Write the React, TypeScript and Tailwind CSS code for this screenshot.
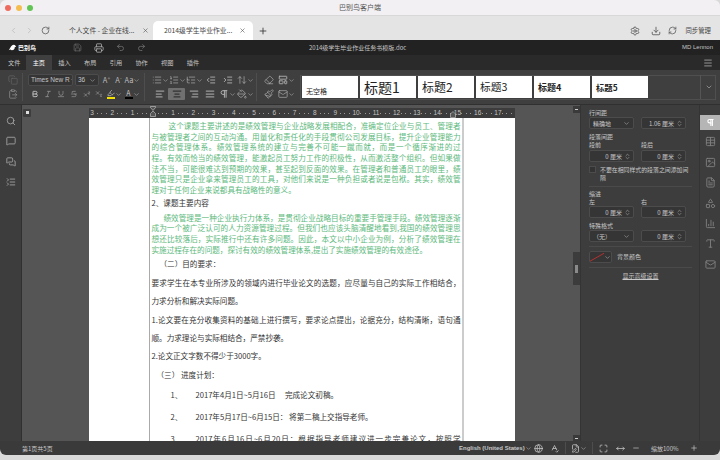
import React from "react";
import {
  ChevronLeft, ChevronRight, RotateCw, X, Plus, Settings, Download, RefreshCw, Save, Printer, Undo2, Redo2, Menu,
  Copy, ClipboardPaste, ChevronDown, ChevronsUpDown, Bold, Italic, Underline, Strikethrough, Superscript, Subscript, Highlighter,
  List, ListOrdered, ListTree, IndentDecrease, IndentIncrease, ArrowUpDown, AlignLeft, AlignCenter, AlignRight, AlignJustify, Pilcrow,
  PaintBucket, Eraser, LayoutTemplate, Paintbrush, Mail, Search, MessageSquare, MessagesSquare, ListCollapse, Table, Image, FileText,
  Shapes, BarChart3, Type, Globe, SpellCheck, FilePen, Maximize, MoveHorizontal, Minus,
} from "lucide-react";

const font = "font-['Noto_Sans_CJK_SC','Liberation_Sans',sans-serif]";

function Caret({ className = "" }: { className?: string }) {
  return <ChevronDown size={7} strokeWidth={2} className={"text-[#aaa] shrink-0 " + className} />;
}

function Tb({ icon: I, w = 13, caret = false, active = false, size = 10, stroke = 1.6, color = "text-[#b0b0b0]" }: { icon: any; w?: number; caret?: boolean; active?: boolean; size?: number; stroke?: number; color?: string }) {
  return (
    <div style={{ width: w }} className={"h-[12px] flex items-center justify-center shrink-0 " + (active ? "bg-[#707070] rounded-[1px]" : "")}>
      <I size={size} strokeWidth={stroke} className={color} />
      {caret && <Caret />}
    </div>
  );
}

function TxtB({ t, w = 13, caret = false, cls = "" }: { t: React.ReactNode; w?: number; caret?: boolean; cls?: string }) {
  return (
    <div style={{ width: w }} className={"h-[12px] flex items-center justify-center shrink-0 text-[7.5px] text-[#b8b8b8] " + cls}>
      {t}
      {caret && <Caret />}
    </div>
  );
}

function Sep() {
  return <div className="w-px h-[28px] bg-[#4e4e4e] shrink-0" />;
}

function Style({ t, cls }: { t: string; cls: string }) {
  return (
    <div className={"w-[56px] h-[22px] bg-white flex items-center pl-[4px] text-[#222] leading-none shrink-0 whitespace-nowrap " + cls}>{t}</div>
  );
}

function Num({ v }: { v: string }) {
  return (
    <div className="w-[45px] h-[12px] bg-[#353535] border border-[#4c4c4c] rounded-[2px] flex items-center justify-end pr-[2px] text-[6px] text-[#c8c8c8] shrink-0">
      <span>{v}</span>
      <ChevronsUpDown size={7} className="ml-[2px] text-[#aaa]" />
    </div>
  );
}

function Sel({ v }: { v: string }) {
  return (
    <div className="w-[45px] h-[12px] bg-[#353535] border border-[#4c4c4c] rounded-[2px] flex items-center justify-between px-[3px] text-[6px] text-[#c8c8c8] shrink-0">
      <span>{v}</span>
      <Caret />
    </div>
  );
}

function Lbl({ t, cls = "" }: { t: string; cls?: string }) {
  return <div className={"text-[6px] leading-[8px] text-[#c8c8c8] " + cls}>{t}</div>;
}

const green1 = [
  "这个课题主要讲述的是绩效管理与企业战略发展相配合，准确定位企业与员工、管理者",
  "与被管理者之间的互动沟通。用量化和责任化的手段贯彻公司发展目标，提升企业管理能力",
  "的综合管理体系。绩效管理系统的建立与完善不可能一蹴而就，而是一个循序渐进的过",
  "程。有效而恰当的绩效管理，能激起员工努力工作的积极性，从而激活整个组织。但如果做",
  "法不当，可能很难达到预期的效果，甚至起到反面的效果。在管理者和普通员工的眼里，绩",
  "效管理只是企业拿来管理员工的工具，对他们来说是一种负担或者说是包袱。其实，绩效管",
];
const green2 = [
  "绩效管理是一种企业执行力体系，是贯彻企业战略目标的重要手管理手段。绩效管理逐渐",
  "成为一个被广泛认可的人力资源管理过程。但我们也应该头脑清醒地看到,我国的绩效管理思",
  "想还比较落后，实际推行中还有许多问题。因此，本文以中小企业为例，分析了绩效管理在",
];

const rulerNums = ["3", "2", "1", "", "1", "2", "3", "4", "5", "6", "7", "8", "9", "10", "11", "12", "13", "14", "15", "16", "17"];
const just = "[text-align:justify] [text-align-last:justify]";

export default function App() {
  return (
    <div className={"w-[720px] h-[460px] bg-[#d9d9d9] overflow-hidden " + font}>
      <div className="w-[720px] h-[455px] rounded-[6px] overflow-hidden flex flex-col">
        {/* title bar */}
        <div className="h-[16px] bg-[#f3f0f3] flex items-center shrink-0 border-b border-[#d8d8d8]">
          <div className="flex gap-[5px] pl-[5px]">
            <div className="w-[6px] h-[6px] rounded-full bg-[#ee6a5e]" />
            <div className="w-[6px] h-[6px] rounded-full bg-[#f5bd4f]" />
            <div className="w-[6px] h-[6px] rounded-full bg-[#61c454]" />
          </div>
          <div className="flex-1 text-center text-[7px] text-[#555] pr-[33px]">巴别鸟客户端</div>
        </div>
        {/* tab bar */}
        <div className="h-[24px] bg-[#e4e4e4] flex items-end shrink-0 text-[6.8px] text-[#444]">
          <div className="h-full flex items-center w-[60px] pl-[9px] gap-[7px] pt-[5px]">
            <ChevronLeft size={9} className="text-[#bbb]" />
            <ChevronRight size={9} className="text-[#bbb]" />
            <RotateCw size={9} className="text-[#555]" />
          </div>
          <div className="w-[93px] h-full flex items-center justify-between pl-[9px] pr-[4px] pt-[5px]">
            <span className="whitespace-nowrap">个人文件 - 企业在线...</span>
            <X size={7} className="text-[#555]" />
          </div>
          <div className="w-[100px] h-[19px] bg-white rounded-t-[5px] flex items-center justify-between pl-[11px] pr-[7px]">
            <span className="whitespace-nowrap">2014级学生毕业作业...</span>
            <X size={7} className="text-[#555]" />
          </div>
          <div className="h-full flex items-center pl-[5px] flex-1 pt-[5px]">
            <Plus size={10} className="text-[#333]" />
            <div className="flex-1" />
            <Settings size={10} className="text-[#555] mr-[11px]" />
            <Download size={10} className="text-[#555] mr-[7px]" />
            <RefreshCw size={9} className="text-[#555] mr-[8px]" />
            <span className="text-[6.4px] mr-[9px]">同步管理</span>
          </div>
        </div>
        {/* doc title bar */}
        <div className="h-[15px] bg-[#222] flex items-center text-[6px] text-[#c4c4c4] shrink-0 relative">
          <div className="w-[70px] pl-[8px] flex items-center gap-[1px] text-white text-[6px] font-bold">
            <svg width="9" height="8" viewBox="0 0 12 10"><path d="M1 8 L4 3 Q6 0 9 1 L11 3 L9 4 Q9 8 5 8 L3 7 Z" fill="#fff" /></svg>
            巴别鸟
          </div>
          <div className="flex items-center gap-[12px] ml-[2.5px]">
            <Save size={9} className="text-[#666]" />
            <Printer size={10} className="text-[#aaa]" />
            <Undo2 size={9} className="text-[#777]" />
            <Redo2 size={9} className="text-[#777]" />
          </div>
          <div className="absolute left-[309px] whitespace-nowrap">2014级学生毕业作业任务书模版.doc</div>
          <div className="ml-auto pr-[7px] font-['Liberation_Sans',sans-serif]">MD Lennon</div>
        </div>
        {/* menu */}
        <div className="h-[15px] bg-[#2a2a2a] flex items-center text-[6.2px] text-[#c4c4c4] shrink-0 pl-[8px]">
          {["文件", "主页", "插入", "布局", "引用", "协作", "视图", "插件"].map((t, i) => (
            <div key={t} className={"w-[25.7px] h-full flex items-center justify-center " + (i === 1 ? "bg-[#3f3f3f] text-white " : "") + (i === 0 ? "!w-[14px] !justify-start mr-[4px]" : "")}>
              {t}
            </div>
          ))}
          <Menu size={10} className="ml-auto mr-[7px] text-[#aaa]" />
        </div>
        {/* toolbar */}
        <div className="h-[35px] bg-[#3f3f3f] flex items-center shrink-0 pl-[6px] text-[#c4c4c4] border-b border-[#303030]">
          <div className="w-[13px] flex flex-col gap-[2px]">
            <Tb icon={Copy} color="text-[#666]" />
            <Tb icon={ClipboardPaste} color="text-[#999]" />
          </div>
          <div className="w-[3px]" />
          <Sep />
          <div className="w-[5px]" />
          <div className="w-[115px] flex flex-col gap-[2px]">
            <div className="flex items-center h-[12px]">
              <div className="w-[45px] h-[12px] bg-[#353535] border border-[#4c4c4c] rounded-[2px] flex items-center justify-between px-[2px] text-[6.5px] whitespace-nowrap overflow-hidden font-['Liberation_Sans',sans-serif]">
                Times New R
                <Caret />
              </div>
              <div className="w-[24px] ml-[2px] h-[12px] bg-[#353535] border border-[#4c4c4c] rounded-[2px] flex items-center justify-between px-[2px] text-[6.5px] font-['Liberation_Sans',sans-serif]">
                36
                <Caret />
              </div>
              <TxtB t={<span>A<span className="text-[5px] align-top">+</span></span>} w={13} cls="ml-[1px]" />
              <TxtB t={<span>A<span className="text-[5px] align-top">-</span></span>} w={11} />
              <TxtB t="Aa" w={17} caret />
            </div>
            <div className="flex items-center h-[12px]">
              <Tb icon={Bold} w={14} size={8} stroke={2.6} color="text-[#ccc]" />
              <Tb icon={Italic} w={12} size={8} />
              <Tb icon={Underline} w={13} size={8} />
              <Tb icon={Strikethrough} w={13} size={8} />
              <Tb icon={Superscript} w={13} size={8} />
              <Tb icon={Subscript} w={12} size={8} />
              <div className="w-[19px] h-[12px] flex items-center justify-center">
                <div className="flex flex-col items-center">
                  <Highlighter size={8} className="text-[#c4c4c4]" />
                  <div className="w-[8px] h-[2px] bg-[#f4e300]" />
                </div>
                <Caret />
              </div>
              <div className="w-[16px] h-[12px] flex items-center justify-center">
                <div className="flex flex-col items-center text-[7px] leading-[8px]">
                  A
                  <div className="w-[8px] h-[2px] bg-black" />
                </div>
                <Caret />
              </div>
            </div>
          </div>
          <div className="w-[1px]" />
          <Sep />
          <div className="w-[6px]" />
          <div className="w-[104px] flex flex-col gap-[2px]">
            <div className="flex items-center h-[12px]">
              <Tb icon={List} w={18} caret />
              <Tb icon={ListOrdered} w={17} caret />
              <Tb icon={ListTree} w={17} caret />
              <Tb icon={IndentDecrease} w={16} stroke={2.2} />
              <Tb icon={IndentIncrease} w={17} stroke={2.2} />
              <Tb icon={ArrowUpDown} w={18} caret />
            </div>
            <div className="flex items-center h-[12px]">
              <Tb icon={AlignLeft} w={17} stroke={3} color="text-[#9a9a9a]" />
              <Tb icon={AlignCenter} w={17} stroke={3} active color="text-[#333]" />
              <Tb icon={AlignRight} w={17} stroke={3} color="text-[#9a9a9a]" />
              <Tb icon={AlignJustify} w={16} stroke={3} color="text-[#9a9a9a]" />
              <Tb icon={Pilcrow} w={18} caret stroke={2.4} />
              <Tb icon={PaintBucket} w={18} caret />
            </div>
          </div>
          <div className="w-[1px]" />
          <Sep />
          <div className="w-[4px]" />
          <div className="w-[36px] flex flex-col gap-[2px]">
            <div className="flex items-center h-[12px]">
              <Tb icon={Eraser} w={15} />
              <Tb icon={LayoutTemplate} w={20} caret stroke={2.2} />
            </div>
            <div className="flex items-center h-[12px]">
              <Tb icon={Paintbrush} w={15} />
              <Tb icon={Mail} w={20} caret />
            </div>
          </div>
          <div className="h-[25px] w-[416px] ml-[3px] border border-[#4f4f4f] flex items-center gap-[2px] pl-[1px] text-[#222] shrink-0">
            <Style t="无空格" cls="text-[7px] !items-end pb-[3px]" />
            <Style t="标题1" cls="text-[14px]" />
            <Style t="标题2" cls="text-[12px]" />
            <Style t="标题3" cls="text-[10.7px]" />
            <Style t="标题4" cls="text-[9px] font-bold" />
            <Style t="标题5" cls="text-[8.4px] font-bold" />
            <div className="w-[48px] h-[22px]" />
            <div className="w-px h-[24px] bg-[#555]" />
            <div className="flex-1 flex items-center justify-center">
              <ChevronDown size={8} className="text-[#aaa]" />
            </div>
          </div>
        </div>
        {/* body */}
        <div className="flex-1 flex min-h-0">
          <div className="w-[22px] bg-[#3d3d3d] border-r border-[#303030] flex flex-col items-center pt-[11px] gap-[10.4px] shrink-0 text-[#aaa]">
            <Search size={10} />
            <MessageSquare size={10} />
            <MessagesSquare size={10} />
            <ListCollapse size={10} />
          </div>
          <div className="w-[558px] bg-[#555] flex shrink-0 overflow-hidden">
            <div className="w-[551px] flex flex-col shrink-0">
              <div className="h-[13px] flex items-center shrink-0 pl-[1px]">
                <div className="w-[8px] h-[8px] bg-[#3d3d3d] rounded-[1px] flex items-center justify-center mt-[2px]">
                  <div className="w-[3px] h-[3px] bg-[#ddd]" />
                </div>
                <div className="relative ml-[58px] w-[426px] h-[10px] mt-[3px] bg-[#3c3c3c] flex items-center text-[6.5px] text-[#c4c4c4] font-['Liberation_Sans',sans-serif]">
                  {rulerNums.map((n, i) => (
                    <div key={i} className="w-[20.27px] shrink-0 flex items-center">
                      <span className="w-[6px] text-center leading-none whitespace-nowrap">{n}</span>
                      <span className="flex-1 flex justify-around pr-[1px]">
                        <span className="w-px h-px bg-[#999]" />
                        <span className="w-px h-px bg-[#999]" />
                        <span className="w-px h-px bg-[#999]" />
                      </span>
                    </div>
                  ))}
                  <div className="absolute left-[61px] -top-[2px] w-[6px] h-[11px]">
                    <svg width="6" height="11" viewBox="0 0 6 11"><path d="M0.5 0.5 H5.5 V1.5 L3 4.5 L0.5 1.5 Z M3 5 L0.5 7.5 V10.5 H5.5 V7.5 Z" fill="#555" stroke="#ccc" strokeWidth="0.6" /></svg>
                  </div>
                  <div className="absolute left-[361px] top-[3px] w-[6px] h-[7px]">
                    <svg width="6" height="7" viewBox="0 0 6 7"><path d="M3 0.5 L0.5 3 V6.5 H5.5 V3 Z" fill="#555" stroke="#ccc" strokeWidth="0.6" /></svg>
                  </div>
                </div>
              </div>
              <div className="flex-1 min-h-0 flex">
                <div className="ml-[67px] w-[426px] bg-white flex shrink-0 overflow-hidden">
                  <div className="w-[61px] shrink-0 border-r border-[#aaa]" />
                  <div className="w-[312px] shrink-0 pl-[1.5px] pr-[1.5px] pt-[3px] text-[7.6px]">
                    <div className="text-[#5cb97c] leading-[10.67px]">
                      {green1.map((l, i) => (
                        <div key={i} className={just + (i === 0 ? " pl-[17px]" : "")}>{l}</div>
                      ))}
                      <div>理对于任何企业来说都具有战略性的意义。</div>
                    </div>
                    <div className="text-[#333] leading-[11px] mt-[1px]">2、课题主要内容</div>
                    <div className="text-[#5cb97c] leading-[10.67px] mt-[5px]">
                      {green2.map((l, i) => (
                        <div key={i} className={just + (i === 0 ? " pl-[12px]" : "")}>{l}</div>
                      ))}
                      <div>实施过程存在的问题，探讨有效的绩效管理体系,提出了实施绩效管理的有效途径。</div>
                    </div>
                    <div className="text-[#333] leading-[18.4px]">
                      <div className="pl-[8px]">（二）目的要求：</div>
                      <div className={just}>要求学生在本专业所涉及的领域内进行毕业论文的选题，应尽量与自己的实际工作相结合，</div>
                      <div>力求分析和解决实际问题。</div>
                      <div className={just}>1.论文要在充分收集资料的基础上进行撰写，要求论点提出，论据充分，结构清晰，语句通</div>
                      <div>顺。力求理论与实际相结合，严禁抄袭。</div>
                      <div>2.论文正文字数不得少于3000字。</div>
                      <div className="pl-[5px]">（三） 进度计划：</div>
                      <div className="leading-[22px] pl-[19px] flex"><span className="w-[25px] shrink-0">1、</span><span>2017年4月1日~5月16日　 完成论文初稿。</span></div>
                      <div className="leading-[22px] pl-[19px] flex"><span className="w-[25px] shrink-0">2、</span><span>2017年5月17日~6月15日： 将第二稿上交指导老师。</span></div>
                      <div className="leading-[22px] pl-[19px] flex"><span className="w-[25px] shrink-0">3、</span><span className={"flex-1 " + just}>2017年6月16日~6月20日：根据指导老师建议进一步完善论文，按照学</span></div>
                    </div>
                  </div>
                  <div className="w-[2px] shrink-0 bg-[#ccc]" />
                  <div className="flex-1" />
                </div>
              </div>
            </div>
            <div className="w-[7px] shrink-0 flex flex-col pt-[1px]">
              <div className="h-[7px] bg-[#3a3a3a] flex items-center justify-center shrink-0"><div className="w-[3px] h-px bg-[#ccc]" /></div>
              <div className="mt-[139px] h-[33px] bg-[#3c3c3c] flex items-center justify-center shrink-0"><div className="w-[3px] h-[8px] bg-[#8a8a8a]" /></div>
              <div className="flex-1" />
              <div className="h-[6px] bg-[#3a3a3a] flex items-center justify-center shrink-0"><div className="w-[3px] h-px bg-[#ccc]" /></div>
            </div>
          </div>
          <div className="w-[119px] bg-[#3d3d3d] border-l border-[#343434] pl-[8px] pt-[4px] shrink-0 flex flex-col">
            <Lbl t="行间距" />
            <div className="flex gap-[7px]"><Sel v="精确地" /><Num v="1.06 厘米" /></div>
            <Lbl t="段落间距" cls="mt-[4px]" />
            <div className="flex gap-[7px]"><Lbl t="段前" cls="w-[45px]" /><Lbl t="段后" /></div>
            <div className="flex gap-[7px] mt-[1px]"><Num v="0 厘米" /><Num v="0 厘米" /></div>
            <div className="flex mt-[4px] gap-[4px]">
              <div className="w-[7px] h-[7px] bg-[#333] border border-[#4c4c4c] shrink-0" />
              <div className="text-[5.9px] leading-[8px] text-[#c8c8c8] w-[90px]">不要在相同样式的段落之间添加间隔</div>
            </div>
            <div className="h-px w-[103px] bg-[#4a4a4a] mt-[4px]" />
            <Lbl t="缩进" cls="mt-[3px]" />
            <div className="flex gap-[7px]"><Lbl t="左" cls="w-[45px]" /><Lbl t="右" /></div>
            <div className="flex gap-[7px]"><Num v="0 厘米" /><Num v="0 厘米" /></div>
            <Lbl t="特殊格式" cls="mt-[4px]" />
            <div className="flex gap-[7px]"><Sel v="（无）" /><Num v="0 厘米" /></div>
            <div className="h-px w-[103px] bg-[#4a4a4a] mt-[4px]" />
            <div className="flex items-center mt-[4px] gap-[5px]">
              <div className="w-[23px] h-[12px] bg-[#353535] border border-[#4c4c4c] rounded-[2px] flex items-center">
                <svg width="15" height="10" viewBox="0 0 15 10"><line x1="0" y1="9.5" x2="15" y2="1" stroke="#c03030" strokeWidth="1" /></svg>
                <Caret />
              </div>
              <Lbl t="背景颜色" />
            </div>
            <div className="h-px w-[103px] bg-[#4a4a4a] mt-[4px]" />
            <div className="w-[103px] text-center text-[6px] leading-[9px] text-[#c8c8c8] mt-[3px]">
              <span className="underline underline-offset-1">显示高级设置</span>
            </div>
          </div>
          <div className="flex-1 bg-[#3d3d3d] border-l border-[#343434] flex flex-col items-center pt-[10px] gap-[9.4px] text-[#808080]">
            <div className="w-full h-[15px] -mb-[3px] bg-[#b5b5b5] flex items-center justify-center"><Pilcrow size={9} strokeWidth={3} className="text-white" /></div>
            <Table size={11} />
            <Image size={11} />
            <FileText size={11} />
            <Shapes size={11} />
            <BarChart3 size={11} />
            <Type size={11} />
            <Mail size={11} />
          </div>
        </div>
        {/* status */}
        <div className="h-[14px] bg-[#3a3a3a] flex items-center shrink-0 pl-[22px] text-[6px] text-[#c8c8c8]">
          <span className="w-[30px] shrink-0 whitespace-nowrap">第1页共5页</span>
          <span className="ml-[407px] w-[64px] shrink-0 font-['Liberation_Sans',sans-serif] font-bold whitespace-nowrap">English (United States)</span>
          <Caret className="ml-[2px]" />
          <Globe size={9} className="ml-[1.5px]" />
          <SpellCheck size={9} className="ml-[7px]" />
          <div className="w-px h-[12px] bg-[#4d4d4d] ml-[6.5px]" />
          <FilePen size={9} className="ml-[5px]" />
          <Caret />
          <div className="w-px h-[12px] bg-[#4d4d4d] ml-[4.5px]" />
          <Maximize size={9} className="ml-[6px]" />
          <MoveHorizontal size={9} className="ml-[8px]" />
          <Minus size={8} className="ml-[7.5px]" />
          <span className="ml-[11px] w-[27px] shrink-0 whitespace-nowrap">缩放100%</span>
          <Plus size={8} className="ml-[12px]" />
        </div>
      </div>
    </div>
  );
}
